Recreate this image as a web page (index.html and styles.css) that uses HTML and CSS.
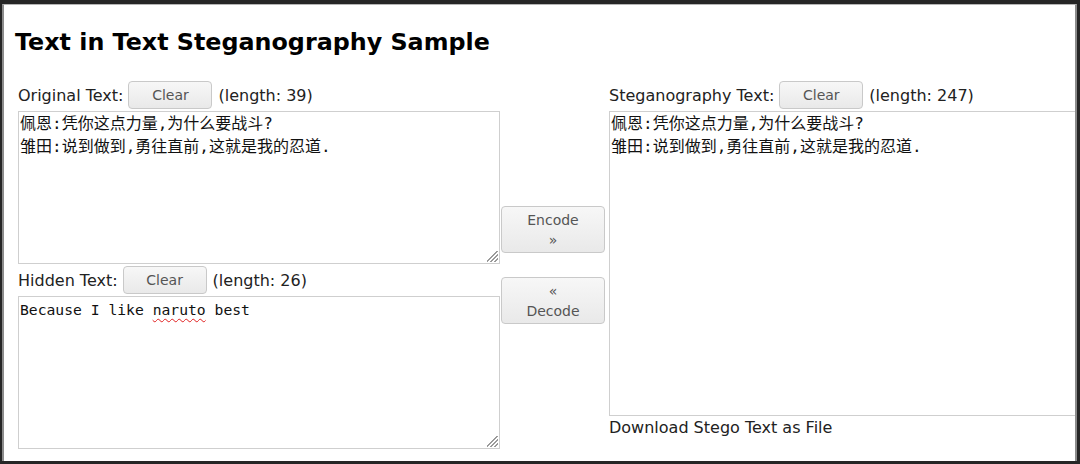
FILE: index.html
```html
<!DOCTYPE html>
<html lang="en">
<head>
<meta charset="utf-8">
<title>Text in Text Steganography Sample</title>
<link rel="stylesheet" href="styles.css">
</head>
<body>
  <div class="window">
    <h1 class="title">Text in Text Steganography Sample</h1>
    <div class="layout">
      <div class="col-left">
        <div class="label-row">
          <span class="label">Original Text:</span>
          <button class="btn btn-clear">Clear</button>
          <span class="len">(length: 39)</span>
        </div>
        <div class="ta ta-orig ta-cjk">佩恩:凭你这点力量,为什么要战斗?<br>雏田:说到做到,勇往直前,这就是我的忍道.</div>
        <div class="label-row">
          <span class="label">Hidden Text:</span>
          <button class="btn btn-clear">Clear</button>
          <span class="len">(length: 26)</span>
        </div>
        <div class="ta ta-hidden">Because I like <span class="misspelled">naruto</span> best</div>
      </div>
      <div class="col-mid">
        <button class="btn btn-action">Encode<br>»</button>
        <button class="btn btn-action">«<br>Decode</button>
      </div>
      <div class="col-right">
        <div class="label-row">
          <span class="label">Steganography Text:</span>
          <button class="btn btn-clear">Clear</button>
          <span class="len">(length: 247)</span>
        </div>
        <div class="ta ta-stego ta-cjk">佩恩:凭你这点力量,为什么要战斗?<br>雏田:说到做到,勇往直前,这就是我的忍道.</div>
        <div class="download">Download Stego Text as File</div>
      </div>
    </div>
  </div>
</body>
</html>
```
FILE: styles.css
```css
html, body {
  margin: 0;
  padding: 0;
}
body {
  background: #262626;
  width: 1080px;
  height: 464px;
  overflow: hidden;
  padding: 4px 3px 0 2px;
  box-sizing: border-box;
  font-family: "DejaVu Sans", "Noto Sans CJK SC", sans-serif;
  font-size: 16px;
  color: #222;
}
.window {
  background: #fff;
  height: 457px;
  border-top: 1px solid #b5b5b5;
  border-left: 2px solid #8c8c8c;
  border-right: 2px solid #8c8c8c;
  overflow: hidden;
  box-sizing: border-box;
}
.title {
  font-size: 23.8px;
  font-weight: bold;
  line-height: 28px;
  margin: 23px 0 25px 11px;
  color: #000;
}
.layout {
  display: flex;
  align-items: center;
  margin-left: 14px;
}
.col-left {
  width: 482px;
  flex: none;
}
.col-mid {
  width: 104px;
  margin-left: 1px;
  flex: none;
  display: flex;
  flex-direction: column;
  gap: 24px;
}
.col-right {
  flex: none;
  width: 480px;
  margin-left: 4px;
  align-self: flex-start;
}
.label-row {
  display: flex;
  align-items: center;
  height: 28px;
  gap: 5px;
  white-space: nowrap;
}
.len {
  margin-left: 1px;
}
.btn {
  font-family: "DejaVu Sans", sans-serif;
  font-size: 14px;
  color: #555;
  background: linear-gradient(#f7f7f7, #e9e9e9);
  border: 1px solid #c9c9c9;
  border-radius: 4px;
  padding: 0;
  box-sizing: border-box;
}
.btn-clear {
  width: 84px;
  height: 28px;
}
.btn-action {
  width: 104px;
  height: 47px;
  line-height: 20px;
}
.ta {
  position: relative;
  margin-top: 2px;
  margin-bottom: 2px;
  border: 1px solid #cfcfcf;
  box-sizing: border-box;
  padding: 0 1px;
  font-family: "DejaVu Sans Mono", "Noto Sans CJK SC", monospace;
  font-size: 14.7px;
  line-height: 23px;
  color: #111;
  background: #fff;
}
.ta-cjk {
  font-size: 16px;
}
.ta-orig, .ta-hidden {
  height: 153px;
}
.ta-orig::after, .ta-hidden::after {
  content: "";
  position: absolute;
  right: 1px;
  bottom: 1px;
  width: 11px;
  height: 11px;
  background: linear-gradient(135deg,
    transparent 0 45%, #9a9a9a 45% 52%, transparent 52% 63%,
    #9a9a9a 63% 70%, transparent 70% 81%, #9a9a9a 81% 88%, transparent 88%);
}
.ta-hidden {
  margin-bottom: 0;
  padding-top: 1px;
}
.ta-stego {
  height: 305px;
  margin-bottom: 0;
}
.misspelled {
  text-decoration: underline wavy #e02020;
  text-decoration-thickness: 1px;
  text-underline-offset: 3px;
}
.download {
  margin-top: 2px;
  line-height: 19px;
  color: #222;
}
```
